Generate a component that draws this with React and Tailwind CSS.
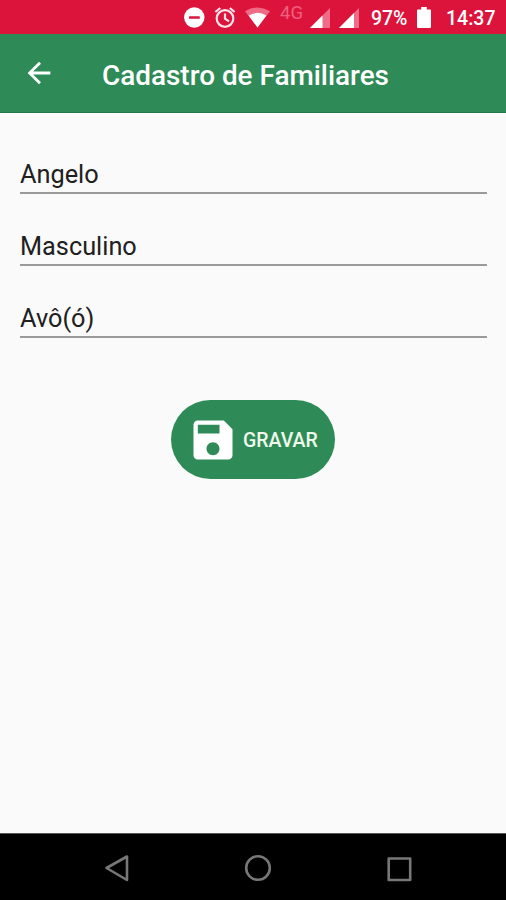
function StatusBar() {
  return (
    <div className="flex h-[34px] items-start bg-[#dc143c] pl-[184px] text-white">
      <svg className="mt-[7px] h-[21px] w-[21px] shrink-0" viewBox="0 0 21 21">
        <circle cx="10.3" cy="10.5" r="10.2" fill="#fff" />
        <rect x="5" y="9.3" width="10.8" height="2.4" rx="0.5" fill="#dc143c" />
      </svg>
      <svg className="ml-[9px] mt-[6px] h-[23px] w-[22px] shrink-0" viewBox="0 0 22 23" fill="none" stroke="#fbe3e8" strokeWidth="2.2">
        <circle cx="11" cy="12.5" r="8.3" />
        <path d="M1.4 6 6.2 2M20.6 6 15.8 2M11 7.5v5.2l4 2.6" />
      </svg>
      <svg className="ml-[9px] mt-[7px] h-[21px] w-[25px] shrink-0" viewBox="0 0 25 21">
        <path d="M0 4.2Q12.5-3.2 25 4.2L12.5 20.5Z" fill="#ee6c85" />
        <path d="M3.6 8.6Q12.5 3 21.4 8.6L12.5 20.5Z" fill="#fff" />
      </svg>
      <span className="ml-[10px] mt-[3px] w-[25px] shrink-0 text-[18.5px] leading-[20px] text-[#f0607c]">4G</span>
      <svg className="ml-[5px] mt-[8px] h-[20px] w-[21px] shrink-0" viewBox="0 0 21 20">
        <path d="M0 20 20 0V20Z" fill="#ee6c85" />
        <path d="M0 20 12.5 7.5V20Z" fill="#fff" />
      </svg>
      <svg className="ml-[8px] mt-[8px] h-[20px] w-[21px] shrink-0" viewBox="0 0 21 20">
        <path d="M0 20 20 0V20Z" fill="#ee6c85" />
        <path d="M0 20 15 5V20Z" fill="#fff" />
      </svg>
      <span className="ml-[11px] mt-[7px] w-[37px] shrink-0 text-[19.5px] font-medium leading-[24px] tracking-[-0.1px]">97%</span>
      <svg className="ml-[9px] mt-[7px] h-[21px] w-[14px] shrink-0" viewBox="0 0 14 21">
        <path d="M4.2 0h5.6v2.4H13q1 0 1 1V20q0 1-1 1H1q-1 0-1-1V3.400q0-1 1-1h3.200Z" fill="#fff" />
      </svg>
      <span className="ml-[15px] mt-[7px] shrink-0 text-[19.5px] font-medium leading-[24px]">14:37</span>
    </div>
  );
}

function Field({ value }) {
  return (
    <div className="flex h-[72px] items-end border-b-2 border-[#9a9a9a] pb-[2px] text-[25.3px] leading-[30px] text-[#202020]">
      {value}
    </div>
  );
}

export default function App() {
  return (
    <div className="flex h-[900px] w-[506px] flex-col overflow-hidden bg-[#fafafa] font-[Roboto,sans-serif]">
      <StatusBar />
      <header className="flex h-[79px] items-center border-b border-[#217a4a] bg-[#2e8b57] pl-[22px] text-white">
        <svg className="h-[34px] w-[34px] shrink-0" viewBox="0 0 24 24" fill="#fff">
          <path d="M20 11H7.830l5.590-5.590L12 4l-8 8 8 8 1.410-1.410L7.830 13H20v-2z" />
        </svg>
        <h1 className="ml-[46px] mt-[5px] text-[27.9px] font-medium leading-[32px]">Cadastro de Familiares</h1>
      </header>
      <main className="flex flex-1 flex-col pl-[20px] pr-[19px] pt-[9px]">
        <Field value="Angelo" />
        <Field value="Masculino" />
        <Field value="Avô(ó)" />
        <button className="ml-[151px] mt-[62px] flex h-[78.500px] w-[164px] items-center rounded-full bg-[#2e8b57] pl-[16px] text-white">
          <svg className="mt-px h-[52px] w-[52px] shrink-0" viewBox="0 0 24 24" fill="#fff">
            <path d="M17 3H5c-1.110 0-2 .9-2 2v14c0 1.100.89 2 2 2h14c1.100 0 2-.9 2-2V7l-4-4zm-5 16c-1.660 0-3-1.340-3-3s1.340-3 3-3 3 1.340 3 3-1.340 3-3 3zm3-10H5V5h10v4z" />
          </svg>
          <span className="ml-[4px] mt-[3px] text-[19.5px] font-medium leading-[24px] text-[#f0faec]">GRAVAR</span>
        </button>
      </main>
      <nav className="flex h-[67px] shrink-0 items-start border-t border-[#555] bg-black pl-[104px] pt-[20px]">
        <svg className="h-[28px] w-[26px]" viewBox="0 0 26 28" fill="none" stroke="#777" strokeWidth="2.600" strokeLinejoin="round">
          <path d="M2.500 14 23 2.500v23.500Z" />
        </svg>
        <svg className="ml-[114px] h-[28px] w-[28px]" viewBox="0 0 28 28" fill="none" stroke="#777" strokeWidth="2.600">
          <circle cx="14" cy="14" r="11.800" />
        </svg>
        <svg className="ml-[114px] h-[28px] w-[28px]" viewBox="0 0 28 28" fill="none" stroke="#777" strokeWidth="2.600" strokeLinejoin="round">
          <rect x="2.700" y="4.500" width="21.500" height="21.500" />
        </svg>
      </nav>
    </div>
  );
}
